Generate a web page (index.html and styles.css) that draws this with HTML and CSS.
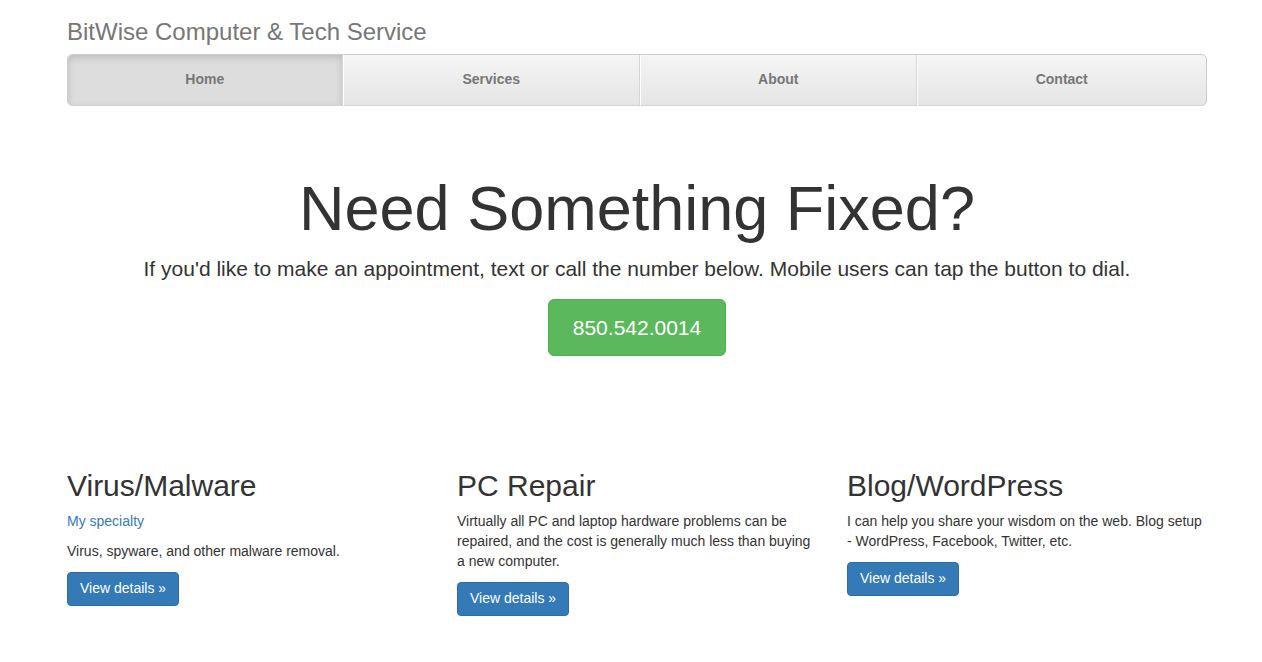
FILE: index.html
```html
<!DOCTYPE html>
<html lang="en">
<head>
    <meta charset="UTF-8">
    <meta name="viewport" content="width=device-width, initial-scale=1.0">
    <title>BitWise Computer &amp; Tech Service</title>
    <link rel="stylesheet" href="styles.css">
</head>
<body>
    <div class="container">
        <!-- 标题和导航 -->
        <div class="masthead">
            <h3 class="text-muted">BitWise Computer &amp; Tech Service</h3>
            <nav>
                <ul class="nav-justified">
                    <li class="active"><a href="#">Home</a></li>
                    <li><a href="#">Services</a></li>
                    <li><a href="#">About</a></li>
                    <li><a href="#">Contact</a></li>
                </ul>
            </nav>
        </div>

        <!-- 主标题 -->
        <div class="jumbotron">
            <h1>Need Something Fixed?</h1>
            <p class="lead">If you'd like to make an appointment, text or call the number below. Mobile users can tap the button to dial.</p>
            <p><a class="btn btn-lg btn-success" href="#">850.542.0014</a></p>
        </div>

        <!-- 服务列表 -->
        <div class="row">
            <div class="col">
                <h2>Virus/Malware</h2>
                <p><a href="#">My specialty</a></p>
                <p>Virus, spyware, and other malware removal.</p>
                <p><a class="btn btn-primary" href="#">View details &raquo;</a></p>
            </div>
            <div class="col">
                <h2>PC Repair</h2>
                <p>Virtually all PC and laptop hardware problems can be repaired, and the cost is generally much less than buying a new computer.</p>
                <p><a class="btn btn-primary" href="#">View details &raquo;</a></p>
            </div>
            <div class="col">
                <h2>Blog/WordPress</h2>
                <p>I can help you share your wisdom on the web. Blog setup - WordPress, Facebook, Twitter, etc.</p>
                <p><a class="btn btn-primary" href="#">View details &raquo;</a></p>
            </div>
        </div>
    </div>
</body>
</html>
```

FILE: styles.css
```css
* {
    box-sizing: border-box;
}

body {
    margin: 0;
    padding-top: 18px;
    font-family: "Liberation Sans", Arial, sans-serif;
    font-size: 14px;
    line-height: 1.42857;
    color: #333;
    background: #fff;
}

a {
    color: #337ab7;
    text-decoration: none;
}

p {
    margin: 0 0 10px;
}

h1, h2, h3 {
    font-weight: 500;
    line-height: 1.1;
    color: inherit;
}

.container {
    width: 1170px;
    padding: 0 15px;
    margin-left: 52px;
}

/* 标题 */
.masthead h3 {
    margin: 0 0 9px;
    padding-top: 1px;
    font-size: 24px;
}

.text-muted {
    color: #777;
}

/* 导航 */
.nav-justified {
    display: grid;
    grid-template-columns: 275fr 298fr 277fr 290fr;
    list-style: none;
    margin: 0;
    padding: 0;
    max-height: 52px;
    background-color: #eee;
    border: 1px solid #ccc;
    border-radius: 5px;
}

.nav-justified a {
    display: block;
    padding: 15px 0;
    font-weight: bold;
    color: #777;
    text-align: center;
    background-color: #e5e5e5;
    background-image: linear-gradient(to bottom, #f5f5f5 0%, #e5e5e5 100%);
    border-bottom: 1px solid #d5d5d5;
    border-right: 1px solid #d5d5d5;
    border-left: 1px solid #fff;
}

.nav-justified li:first-child a {
    border-left: 0;
    border-radius: 5px 0 0 5px;
}

.nav-justified li:last-child a {
    border-right: 0;
    border-radius: 0 5px 5px 0;
}

.nav-justified .active a {
    background-color: #ddd;
    background-image: none;
    box-shadow: inset 0 3px 7px rgba(0, 0, 0, .15);
}

/* 主标题区域 */
.jumbotron {
    padding: 48px 0;
    margin-bottom: 30px;
    text-align: center;
}

.jumbotron h1 {
    margin: 20px 0 10px;
    font-size: 63px;
}

.jumbotron p {
    margin-bottom: 15px;
    font-size: 21px;
    font-weight: 200;
}

.jumbotron .btn {
    font-size: 21px;
    padding: 14px 24px;
    line-height: 1.3;
    border-radius: 6px;
}

/* 按钮 */
.btn {
    display: inline-block;
    padding: 6px 12px;
    font-size: 14px;
    line-height: 1.42857;
    border: 1px solid transparent;
    border-radius: 4px;
    vertical-align: middle;
}

.btn-success {
    color: #fff;
    background-color: #5cb85c;
    border-color: #4cae4c;
}

.btn-primary {
    color: #fff;
    background-color: #337ab7;
    border-color: #2e6da4;
}

/* 三栏 */
.row {
    display: flex;
    margin: 0 -15px;
}

.col {
    width: 390px;
    padding: 0 15px;
}

.col h2 {
    margin: 20px 0 10px;
    font-size: 30px;
}
```
